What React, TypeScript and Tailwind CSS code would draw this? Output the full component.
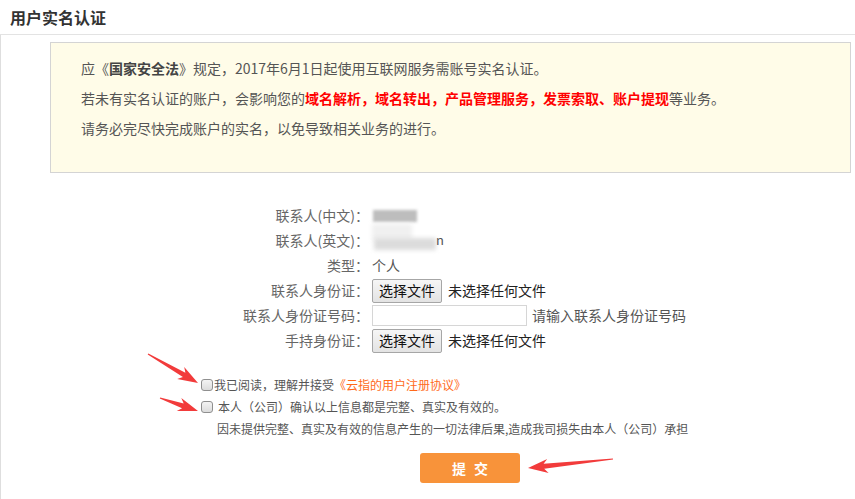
const font = { fontFamily: '"Microsoft YaHei", "Noto Sans CJK SC", "Noto Sans", sans-serif' };

function arrowPoints(x1: number, y1: number, x2: number, y2: number) {
  // tapered arrow from tail (x1,y1) to tip (x2,y2)
  const dx = x2 - x1;
  const dy = y2 - y1;
  const len = Math.hypot(dx, dy);
  const ux = dx / len;
  const uy = dy / len;
  const nx = -uy;
  const ny = ux;
  const headLen = 20;
  const bx = x2 - ux * headLen;
  const by = y2 - uy * headLen;
  const p = (x: number, y: number) => `${x.toFixed(1)},${y.toFixed(1)}`;
  return [
    p(x1 + nx * 0.5, y1 + ny * 0.5),
    p(bx + nx * 2.5 + ux * 4, by + ny * 2.5 + uy * 4),
    p(bx + nx * 7, by + ny * 7),
    p(x2, y2),
    p(bx - nx * 7, by - ny * 7),
    p(bx - nx * 2.5 + ux * 4, by - ny * 2.5 + uy * 4),
    p(x1 - nx * 0.5, y1 - ny * 0.5),
  ].join(" ");
}

function FileButton() {
  return (
    <div className="flex items-center">
      <span className="h-[24px] w-[70px] flex items-center justify-center border border-[#a6a6a6] rounded-[2px] bg-gradient-to-b from-[#f6f6f6] to-[#e3e3e3] text-[14px] text-[#111]">
        选择文件
      </span>
      <span className="ml-[6px] text-[14px] text-[#222]">未选择任何文件</span>
    </div>
  );
}

function Row({ label, children }: { label: string; children: React.ReactNode }) {
  return (
    <div className="flex items-center h-[25px]">
      <span className="w-[368px] text-right text-[14px] text-[#666]">{label}</span>
      <div className="ml-[3px] flex items-center text-[14px] text-[#555]">{children}</div>
    </div>
  );
}

function CheckBox() {
  return (
    <span className="inline-block w-[12px] h-[12px] rounded-[3px] border border-[#8f8f8f] bg-gradient-to-b from-[#f4f4f4] to-[#dcdcdc] shrink-0" />
  );
}

export default function App() {
  return (
    <div className="relative w-[855px] h-[499px] bg-white overflow-hidden" style={font}>
      <div className="h-[35px] border-b border-[#e3e3e3] pl-[10px] flex items-center">
        <h1 className="text-[16px] font-bold text-[#333]">用户实名认证</h1>
      </div>

      <div className="border-l border-[#dedede] h-[464px]">
        <div className="pl-[49px] pr-[4px] pt-[7px]">
          <div className="border border-[#d4d4d4] bg-[#fffce8] pl-[30px] pt-[10px] pb-[29px] text-[14px] text-[#555] leading-[30px]">
            <p>
              应《<b className="text-[#444]">国家安全法</b>》规定，2017年6月1日起使用互联网服务需账号实名认证。
            </p>
            <p>
              若未有实名认证的账户，会影响您的
              <b className="text-[#ff0000]">域名解析，域名转出，产品管理服务，发票索取、账户提现</b>
              等业务。
            </p>
            <p>请务必完尽快完成账户的实名，以免导致相关业务的进行。</p>
          </div>
        </div>

        <div className="mt-[30px] flex flex-col">
          <Row label="联系人(中文)：">
            <span className="relative w-[50px] h-[14px]">
              <span className="absolute left-[1px] top-[1px] w-[44px] h-[12px] bg-[#bdbdbd] blur-[1.5px]" />
            </span>
          </Row>
          <Row label="联系人(英文)：">
            <span className="relative w-[80px] h-[18px]">
              <span className="absolute left-[0px] top-[-8px] w-[40px] h-[16px] bg-[#f0f0f0] blur-[2px]" />
              <span className="absolute left-[2px] top-[6px] w-[62px] h-[12px] bg-[#dcdcdc] blur-[2px]" />
              <span className="absolute left-[64px] top-[0px] text-[13px] leading-[16px] text-[#555]">n</span>
            </span>
          </Row>
          <Row label="类型：">
            <span>个人</span>
          </Row>
          <Row label="联系人身份证：">
            <FileButton />
          </Row>
          <Row label="联系人身份证号码：">
            <span className="w-[155px] h-[21px] border border-[#d6d6d6] bg-white" />
            <span className="ml-[5px] text-[14px] text-[#555]">请输入联系人身份证号码</span>
          </Row>
          <Row label="手持身份证：">
            <FileButton />
          </Row>
        </div>

        <div className="mt-[21px] pl-[200px] text-[12px] text-[#555]">
          <div className="flex items-center h-[22px]">
            <CheckBox />
            <span className="ml-[1px]">
              我已阅读，理解并接受<span className="text-[#ff6a1a]">《云指的用户注册协议》</span>
            </span>
          </div>
          <div className="flex items-center h-[22px]">
            <CheckBox />
            <span className="ml-[5px]">本人（公司）确认以上信息都是完整、真实及有效的。</span>
          </div>
          <div className="flex items-center h-[21px] pl-[16px]">
            因未提供完整、真实及有效的信息产生的一切法律后果,造成我司损失由本人（公司）承担
          </div>
        </div>

        <div className="mt-[14px] pl-[419px]">
          <button className="w-[100px] h-[30px] rounded-[3px] bg-[#f8933a] text-white text-[14px] font-bold tracking-[8px] pl-[8px]">
            提交
          </button>
        </div>
      </div>

      <svg className="absolute inset-0 pointer-events-none" width="855" height="499">
        <polygon points={arrowPoints(148, 354, 198, 383)} fill="#f23b3b" />
        <polygon points={arrowPoints(160, 398, 198, 411)} fill="#f23b3b" />
        <polygon points={arrowPoints(613, 459, 528, 468)} fill="#f23b3b" />
      </svg>
    </div>
  );
}
